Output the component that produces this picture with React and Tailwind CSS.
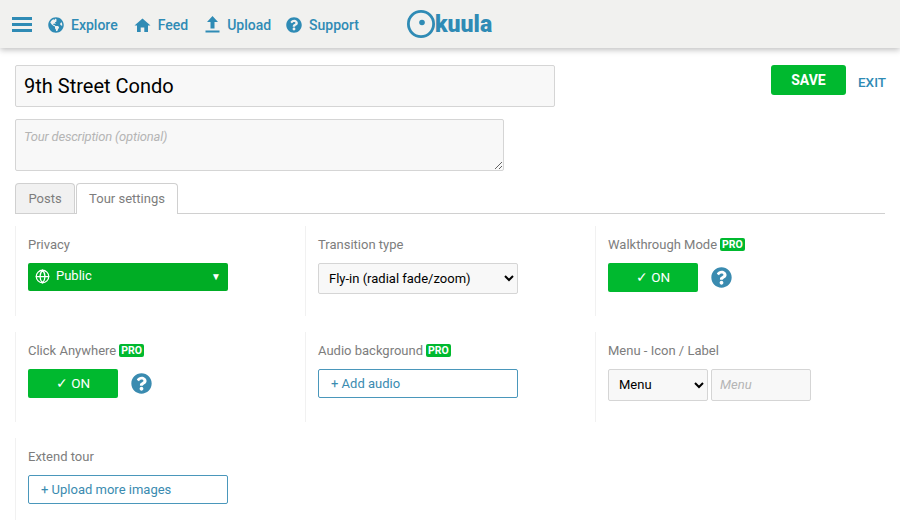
import { FaGlobeAmericas, FaQuestionCircle } from "react-icons/fa";
import { Globe } from "lucide-react";

const Pro = () => (
  <span className="ml-[3px] rounded-[2px] bg-[#00b92f] px-[2px] text-[10.5px] leading-[13px] font-bold text-white">PRO</span>
);

function Cell({ label, pro, children }) {
  return (
    <div className="h-[90px] border-l border-[#f1f1f1] pl-3 pt-[10px]">
      <div className="flex h-[17px] items-center text-[13px] text-[#7d7d7d]">
        {label}
        {pro && <Pro />}
      </div>
      <div className="mt-[10px] flex items-center">{children}</div>
    </div>
  );
}

function Toggle() {
  return (
    <>
      <button className="h-[29px] w-[90px] rounded-[2px] bg-[#00b92f] text-[13.5px] text-white">✓ ON</button>
      <FaQuestionCircle className="ml-[13px] text-[#3a8bb0]" size={21} />
    </>
  );
}

function NavItem({ icon, label, className }) {
  return (
    <a className={`flex items-center gap-[7px] text-sm font-medium text-[#2f8bb5] ${className}`}>
      {icon}
      {label}
    </a>
  );
}

function OutlineButton({ children }) {
  return (
    <button className="h-[29px] w-[200px] rounded-[2px] border border-[#4a97bb] pl-3 text-left text-[13px] text-[#3a8bb0]">
      {children}
    </button>
  );
}

export default function App() {
  return (
    <div className="h-[520px] w-[900px] overflow-hidden bg-white font-['Roboto',sans-serif]">
      <header className="flex h-12 items-center bg-[#f1f1ef] pl-3 shadow-[0_2px_6px_rgba(0,0,0,0.25)]">
        <div className="flex w-5 flex-col gap-[3px]">
          <span className="h-[3px] bg-[#2f8bb5]" />
          <span className="h-[3px] bg-[#2f8bb5]" />
          <span className="h-[3px] bg-[#2f8bb5]" />
        </div>
        <NavItem className="ml-4 pt-[1px]" icon={<FaGlobeAmericas size={16} />} label="Explore" />
        <NavItem
          className="ml-4 pt-[1px]"
          label="Feed"
          icon={
            <svg width="17" height="16" viewBox="0 0 16 16" fill="#2f8bb5">
              <path d="M8 1.5 L16 8.5 H13.5 V15 H9.8 V10.5 H6.2 V15 H2.5 V8.5 H0 Z" />
            </svg>
          }
        />
        <NavItem
          className="ml-[17px] pt-[1px]"
          label="Upload"
          icon={
            <svg width="15" height="17" viewBox="0 0 15 17" fill="#2f8bb5">
              <path d="M7.5 0 L13 6 H9.5 V12.5 H5.5 V6 H2 Z" />
              <rect x="0.5" y="14.5" width="14" height="2" />
            </svg>
          }
        />
        <NavItem className="ml-[15px] pt-[1px]" icon={<FaQuestionCircle size={16} />} label="Support" />
        <div className="ml-[47px] flex items-center">
          <svg width="30" height="30" viewBox="0 0 30 30">
            <circle cx="15" cy="15" r="12.6" fill="none" stroke="#2f8bb5" strokeWidth="2.8" />
            <circle cx="16" cy="13.5" r="2.8" fill="#2f8bb5" />
          </svg>
          <span className="ml-[-1px] pt-[1px] text-[23px] leading-none font-black text-[#2f8bb5]">kuula</span>
        </div>
      </header>

      <main className="px-[15px] pt-[17px]">
        <div className="flex items-start">
          <div>
            <input
              defaultValue="9th Street Condo"
              className="block h-[42px] w-[540px] rounded-[2px] border border-[#d5d5d5] bg-[#f8f8f8] px-2 text-xl text-black outline-none"
            />
            <textarea
              placeholder="Tour description (optional)"
              className="mt-3 block h-[52px] w-[489px] rounded-[2px] border border-[#d5d5d5] bg-[#f8f8f8] px-2 py-[7px] text-[13px] tracking-[-0.2px] italic placeholder:text-[#b5b5b5]"
            />
          </div>
          <button className="ml-auto h-[30px] w-[75px] rounded-[3px] bg-[#00b92f] text-sm font-bold text-white">
            SAVE
          </button>
          <a className="mt-[7px] mr-[-1px] ml-3 text-[13.5px] font-medium text-[#2f8bb5]">EXIT</a>
        </div>

        <div className="mt-3 flex h-[31px] items-end gap-[1px] border-b border-[#d0d0d0] text-[13px] text-[#7d7d7d]">
          <div className="flex h-[30px] w-[60px] items-center justify-center rounded-t-[4px] border border-b-0 border-[#d0d0d0] bg-[#f1f1f1]">
            Posts
          </div>
          <div className="mb-[-1px] flex h-[31px] w-[102px] items-center justify-center rounded-t-[4px] border border-b-0 border-[#d0d0d0] bg-white">
            Tour settings
          </div>
        </div>

        <div className="mt-3 grid grid-cols-[290px_290px_290px] gap-y-4">
          <Cell label="Privacy">
            <div className="flex h-[28px] w-[200px] items-center rounded-[2px] bg-[#00ad25] px-[7px] pb-[2px] text-[13px] text-white">
              <Globe size={15} />
              <span className="ml-[6px]">Public</span>
              <span className="ml-auto text-[10px]">▼</span>
            </div>
          </Cell>
          <Cell label="Transition type">
            <select className="h-[31px] w-[200px] rounded-[2px] border border-[#d5d5d5] bg-[#f8f8f8] pl-[6px] text-[13px] text-black">
              <option>Fly-in (radial fade/zoom)</option>
            </select>
          </Cell>
          <Cell label="Walkthrough Mode" pro>
            <Toggle />
          </Cell>
          <Cell label="Click Anywhere" pro>
            <Toggle />
          </Cell>
          <Cell label="Audio background" pro>
            <OutlineButton>+ Add audio</OutlineButton>
          </Cell>
          <Cell label="Menu - Icon / Label">
            <select className="h-[32px] w-[100px] rounded-[2px] border border-[#d5d5d5] bg-[#f8f8f8] pb-[1px] pl-[6px] text-[13px] text-black">
              <option>Menu</option>
            </select>
            <input
              placeholder="Menu"
              className="ml-[3px] h-[32px] w-[100px] rounded-[2px] border border-[#d5d5d5] bg-[#f8f8f8] px-2 pb-[1px] text-[13px] italic placeholder:text-[#b5b5b5]"
            />
          </Cell>
          <Cell label="Extend tour">
            <OutlineButton>+ Upload more images</OutlineButton>
          </Cell>
        </div>
      </main>
    </div>
  );
}
